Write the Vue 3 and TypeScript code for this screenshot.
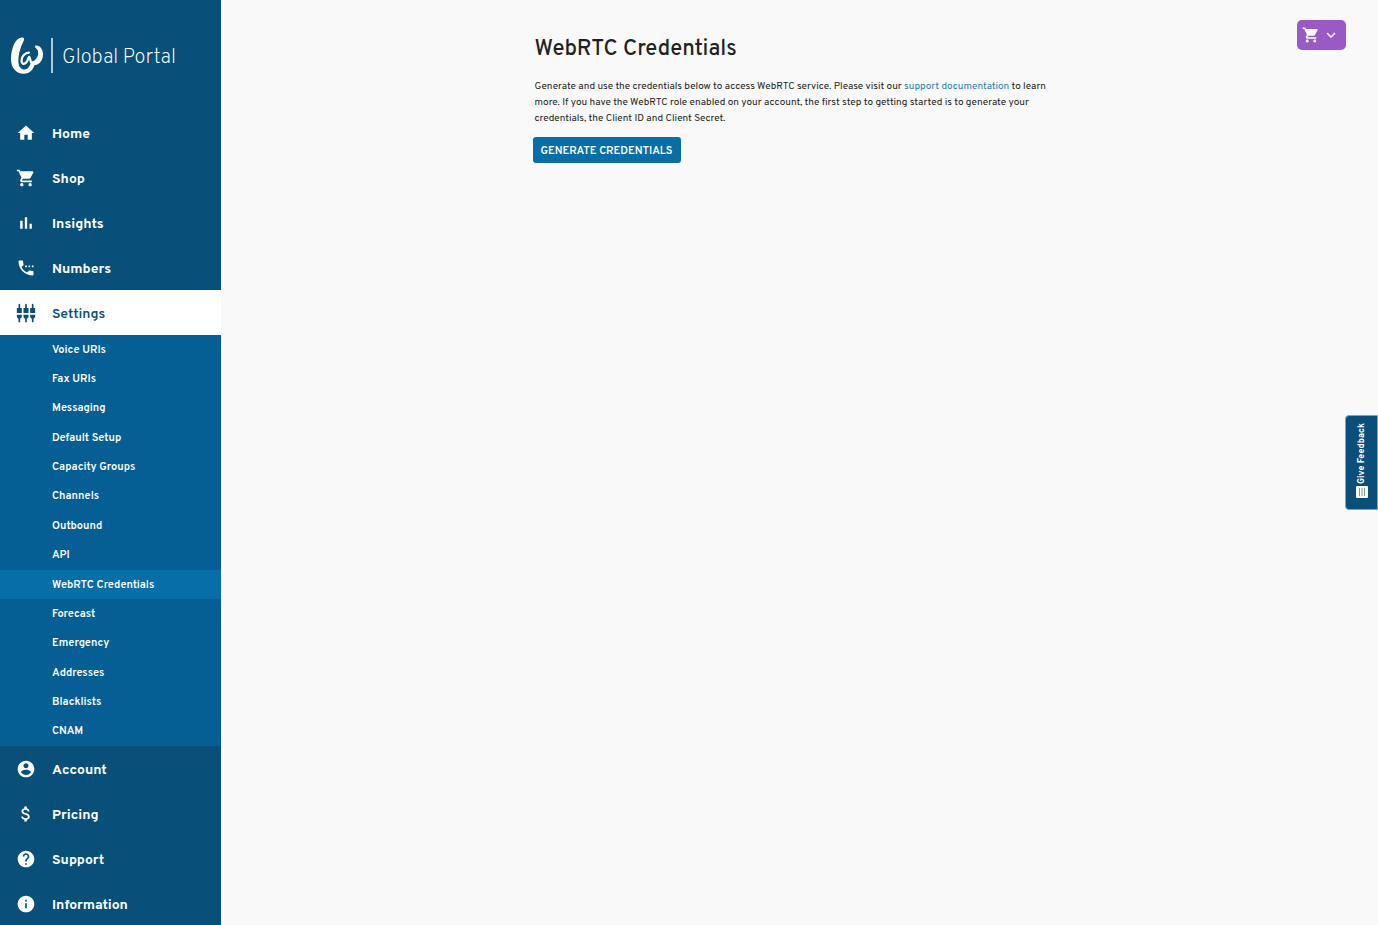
<script setup lang="ts">
interface NavItem {
  label: string
  icon: string
  active?: boolean
}

const icons: Record<string, string> = {
  home: 'M10 20v-6h4v6h5v-8h3L12 3 2 12h3v8z',
  cart: 'M7 18c-1.1 0-1.99.9-1.99 2S5.9 22 7 22s2-.9 2-2-.9-2-2-2zM1 2v2h2l3.6 7.59-1.35 2.45c-.16.28-.25.61-.25.96 0 1.1.9 2 2 2h12v-2H7.42c-.14 0-.25-.11-.25-.25l.03-.12.9-1.63h7.45c.75 0 1.41-.41 1.75-1.03l3.58-6.49c.08-.14.12-.31.12-.48 0-.55-.45-1-1-1H5.21l-.94-2H1zm16 16c-1.1 0-1.99.9-1.99 2s.89 2 1.99 2 2-.9 2-2-.9-2-2-2z',
  chart: 'M5 9.2h3V19H5zM10.6 5h2.8v14h-2.8zm5.600 8H19v6h-2.800z',
  phone: 'M11 9v2h2V9h-2zm4 0v2h2V9h-2zm5 6.500c-1.250 0-2.450-.2-3.570-.57-.1-.03-.21-.05-.31-.05-.26 0-.51.1-.71.29l-2.200 2.200c-2.830-1.440-5.150-3.750-6.590-6.580l2.200-2.210c.28-.27.36-.66.25-1.010C8.700 6.450 8.500 5.250 8.500 4c0-.55-.45-1-1-1H4c-.55 0-1 .45-1 1 0 9.390 7.610 17 17 17 .55 0 1-.45 1-1v-3.500c0-.55-.45-1-1-1zM19 9v2h2V9h-2z',
  settings:
    'M5 2c0-.55-.45-1-1-1s-1 .45-1 1v4H1v6h6V6H5V2zm4 14c0 1.300.84 2.400 2 2.820V23h2v-4.180c1.160-.41 2-1.510 2-2.820v-2H9v2zm-8 0c0 1.300.84 2.400 2 2.820V23h2v-4.180C6.160 18.400 7 17.300 7 16v-2H1v2zM21 6V2c0-.55-.45-1-1-1s-1 .45-1 1v4h-2v6h6V6h-2zm-8-4c0-.55-.45-1-1-1s-1 .45-1 1v4H9v6h6V6h-2V2zm4 14c0 1.300.84 2.400 2 2.820V23h2v-4.180c1.160-.41 2-1.510 2-2.820v-2h-6v2z',
  account:
    'M12 2C6.480 2 2 6.480 2 12s4.480 10 10 10 10-4.480 10-10S17.520 2 12 2zm0 3c1.660 0 3 1.340 3 3s-1.340 3-3 3-3-1.340-3-3 1.340-3 3-3zm0 14.200c-2.500 0-4.710-1.280-6-3.220.03-1.990 4-3.080 6-3.080 1.990 0 5.970 1.090 6 3.080-1.290 1.940-3.500 3.220-6 3.220z',
  dollar:
    'M11.800 10.900c-2.270-.59-3-1.200-3-2.150 0-1.090 1.010-1.850 2.700-1.850 1.780 0 2.440.85 2.500 2.100h2.210c-.07-1.720-1.120-3.300-3.210-3.810V3h-3v2.160c-1.940.42-3.500 1.680-3.500 3.610 0 2.310 1.910 3.460 4.700 4.130 2.500.6 3 1.480 3 2.410 0 .69-.49 1.790-2.700 1.790-2.060 0-2.870-.92-2.980-2.100h-2.200c.12 2.190 1.760 3.420 3.680 3.830V21h3v-2.150c1.950-.37 3.500-1.500 3.500-3.550 0-2.840-2.430-3.810-4.700-4.400z',
  help: 'M12 2C6.480 2 2 6.480 2 12s4.480 10 10 10 10-4.480 10-10S17.520 2 12 2zm1 17h-2v-2h2v2zm2.070-7.750l-.9.920C13.450 12.900 13 13.500 13 15h-2v-.5c0-1.100.45-2.100 1.170-2.830l1.240-1.260c.37-.36.59-.86.59-1.410 0-1.100-.9-2-2-2s-2 .9-2 2H8c0-2.210 1.790-4 4-4s4 1.790 4 4c0 .88-.36 1.680-.93 2.250z',
  info: 'M12 2C6.480 2 2 6.480 2 12s4.480 10 10 10 10-4.480 10-10S17.520 2 12 2zm1 15h-2v-6h2v6zm0-8h-2V7h2v2z',
  chevron: 'M7.410 8.590L12 13.170l4.590-4.580L18 10l-6 6-6-6z',
}

const topItems: NavItem[] = [
  { label: 'Home', icon: 'home' },
  { label: 'Shop', icon: 'cart' },
  { label: 'Insights', icon: 'chart' },
  { label: 'Numbers', icon: 'phone' },
  { label: 'Settings', icon: 'settings', active: true },
]

const settingsItems: string[] = [
  'Voice URIs',
  'Fax URIs',
  'Messaging',
  'Default Setup',
  'Capacity Groups',
  'Channels',
  'Outbound',
  'API',
  'WebRTC Credentials',
  'Forecast',
  'Emergency',
  'Addresses',
  'Blacklists',
  'CNAM',
]
const currentPage = 'WebRTC Credentials'

const bottomItems: NavItem[] = [
  { label: 'Account', icon: 'account' },
  { label: 'Pricing', icon: 'dollar' },
  { label: 'Support', icon: 'help' },
  { label: 'Information', icon: 'info' },
]
</script>

<template>
  <div class="portal">
    <aside class="sidebar">
      <a class="brand" href="#">
        <svg class="brand-mark" viewBox="0 0 100 114" aria-hidden="true">
          <path
            d="M34 1C43 1 42 8 38 15C28 34 23 55 23 74C23 91 31 101 42 101C52 101 57 93 62 80L75 83C70 102 58 114 40 114C15 114 0 95 0 68C0 37 13 2 34 1Z"
          />
          <path
            d="M75 26C90 23 100 37 100 53C100 73 88 87 73 87C65 87 61 82 60 74C66 77 73 74 78 68C85 60 86 51 84 42C82 36 75 36 75 26Z"
          />
          <path class="brand-curl" d="M56 48C44 48 33 60 33 73C33 86 44 85 49 77M49 77C54 72 53 62 57 61C61 62 58 74 64 79" />
        </svg>
        <span class="brand-name">Global Portal</span>
      </a>
      <nav aria-label="Main">
        <a v-for="item in topItems" :key="item.label" class="nav-item" :class="{ active: item.active }" href="#">
          <svg viewBox="0 0 24 24" aria-hidden="true"><path :d="icons[item.icon]" /></svg>
          <span>{{ item.label }}</span>
        </a>
        <ul class="submenu">
          <li v-for="label in settingsItems" :key="label">
            <a href="#" :class="{ current: label === currentPage }">{{ label }}</a>
          </li>
        </ul>
        <a v-for="item in bottomItems" :key="item.label" class="nav-item" href="#">
          <svg viewBox="0 0 24 24" aria-hidden="true"><path :d="icons[item.icon]" /></svg>
          <span>{{ item.label }}</span>
        </a>
      </nav>
    </aside>

    <main class="main">
      <section class="content">
        <h1>WebRTC Credentials</h1>
        <p>
          Generate and use the credentials below to access WebRTC service. Please visit our
          <a href="#">support documentation</a> to learn<br />
          more. If you have the WebRTC role enabled on your account, the first step to getting started is to generate your<br />
          credentials, the Client ID and Client Secret.
        </p>
        <button class="generate" type="button">GENERATE CREDENTIALS</button>
      </section>
    </main>

    <button class="cart" type="button" aria-label="Cart">
      <svg viewBox="0 0 24 24" aria-hidden="true"><path :d="icons.cart" /></svg>
      <svg viewBox="0 0 24 24" aria-hidden="true"><path :d="icons.chevron" /></svg>
    </button>

    <button class="feedback" type="button">
      <svg viewBox="0 0 12 12" aria-hidden="true">
        <rect width="12" height="12" rx="1" fill="#fff" />
        <path d="M2 3.500h8M2 6h8M2 8.500h8" stroke="#6f9ab5" />
      </svg>
      <span>Give Feedback</span>
    </button>
  </div>
</template>

<style>
body {
  margin: 0;
  background: #f9f9f9;
}
</style>

<style scoped>
.portal {
  display: flex;
  height: 100vh;
  overflow: hidden;
  background: #f9f9f9;
  color: #212121;
  font-family: Overpass, Roboto, "Liberation Sans", sans-serif;
}

a {
  text-decoration: none;
}

.sidebar {
  flex: 0 0 221px;
  overflow: hidden;
  background: #084f79;
}

.brand {
  display: flex;
  align-items: center;
  height: 110px;
  padding-left: 11px;
  color: #fff;
}

.brand-mark {
  width: 32px;
  height: 37px;
  fill: #fff;
}

.brand-curl {
  fill: none;
  stroke: #fff;
  stroke-width: 7;
  stroke-linecap: round;
}

.brand-name {
  box-sizing: border-box;
  height: 35px;
  margin-left: 8px;
  padding-top: 3px;
  padding-left: 9px;
  border-left: 2px solid #b5cad7;
  font-size: 20px;
  font-weight: 200;
  line-height: 35px;
  white-space: nowrap;
}

.nav-item {
  display: flex;
  align-items: center;
  gap: 16px;
  height: 45px;
  padding-left: 16px;
  color: #fff;
  font-size: 14px;
  font-weight: 700;
}

.nav-item span {
  padding-top: 4px;
}

.nav-item svg {
  width: 20px;
  height: 20px;
  fill: currentColor;
}

.nav-item.active {
  background: #fff;
  color: #084f79;
  font-weight: 600;
}

.submenu {
  display: grid;
  grid-auto-rows: 1fr;
  height: 411px;
  margin: 0;
  padding: 0;
  background: #065f94;
  list-style: none;
}

.submenu li {
  display: flex;
}

.submenu a {
  display: flex;
  flex: 1;
  align-items: center;
  padding-left: 52px;
  color: #fff;
  font-size: 11px;
  font-weight: 600;
}

.submenu a.current {
  background: #076ea8;
}

.main {
  flex: 1;
  min-width: 0;
}

.content {
  max-width: 534px;
  margin: 0 auto;
  padding-top: 34px;
}

h1 {
  margin: 0 0 13px;
  padding-left: 2px;
  font-size: 22px;
  font-weight: 500;
  line-height: 32px;
}

p {
  margin: 0 0 10px;
  padding-left: 2px;
  font-size: 10px;
  line-height: 16px;
  white-space: nowrap;
}

p a {
  color: #1c7fb8;
}

.generate {
  height: 26px;
  padding: 2px 8px 0;
  border: 0;
  border-radius: 3px;
  background: #076ea8;
  color: #fff;
  font-family: inherit;
  font-size: 11px;
  font-weight: 600;
}

.cart {
  position: absolute;
  top: 20px;
  right: 32px;
  display: flex;
  align-items: center;
  gap: 2px;
  width: 49px;
  height: 30px;
  padding: 0 5px;
  border: 0;
  border-radius: 5px;
  background: #9b59c5;
}

.cart svg {
  flex: none;
  width: 18px;
  height: 18px;
  fill: #fff;
}

.feedback {
  position: absolute;
  top: 415px;
  right: 0;
  display: flex;
  flex-direction: column-reverse;
  align-items: center;
  gap: 2px;
  width: 33px;
  height: 95px;
  padding: 0 10px 11px;
  border: 1px solid #7fa3ba;
  border-radius: 4px 0 0 4px;
  background: #084f79;
  color: #fff;
  font-family: inherit;
  font-size: 9px;
  font-weight: 700;
}

.feedback svg {
  flex: none;
  width: 12px;
  height: 12px;
  transform: rotate(-90deg);
}

.feedback span {
  writing-mode: vertical-rl;
  transform: rotate(180deg);
  white-space: nowrap;
}
</style>
